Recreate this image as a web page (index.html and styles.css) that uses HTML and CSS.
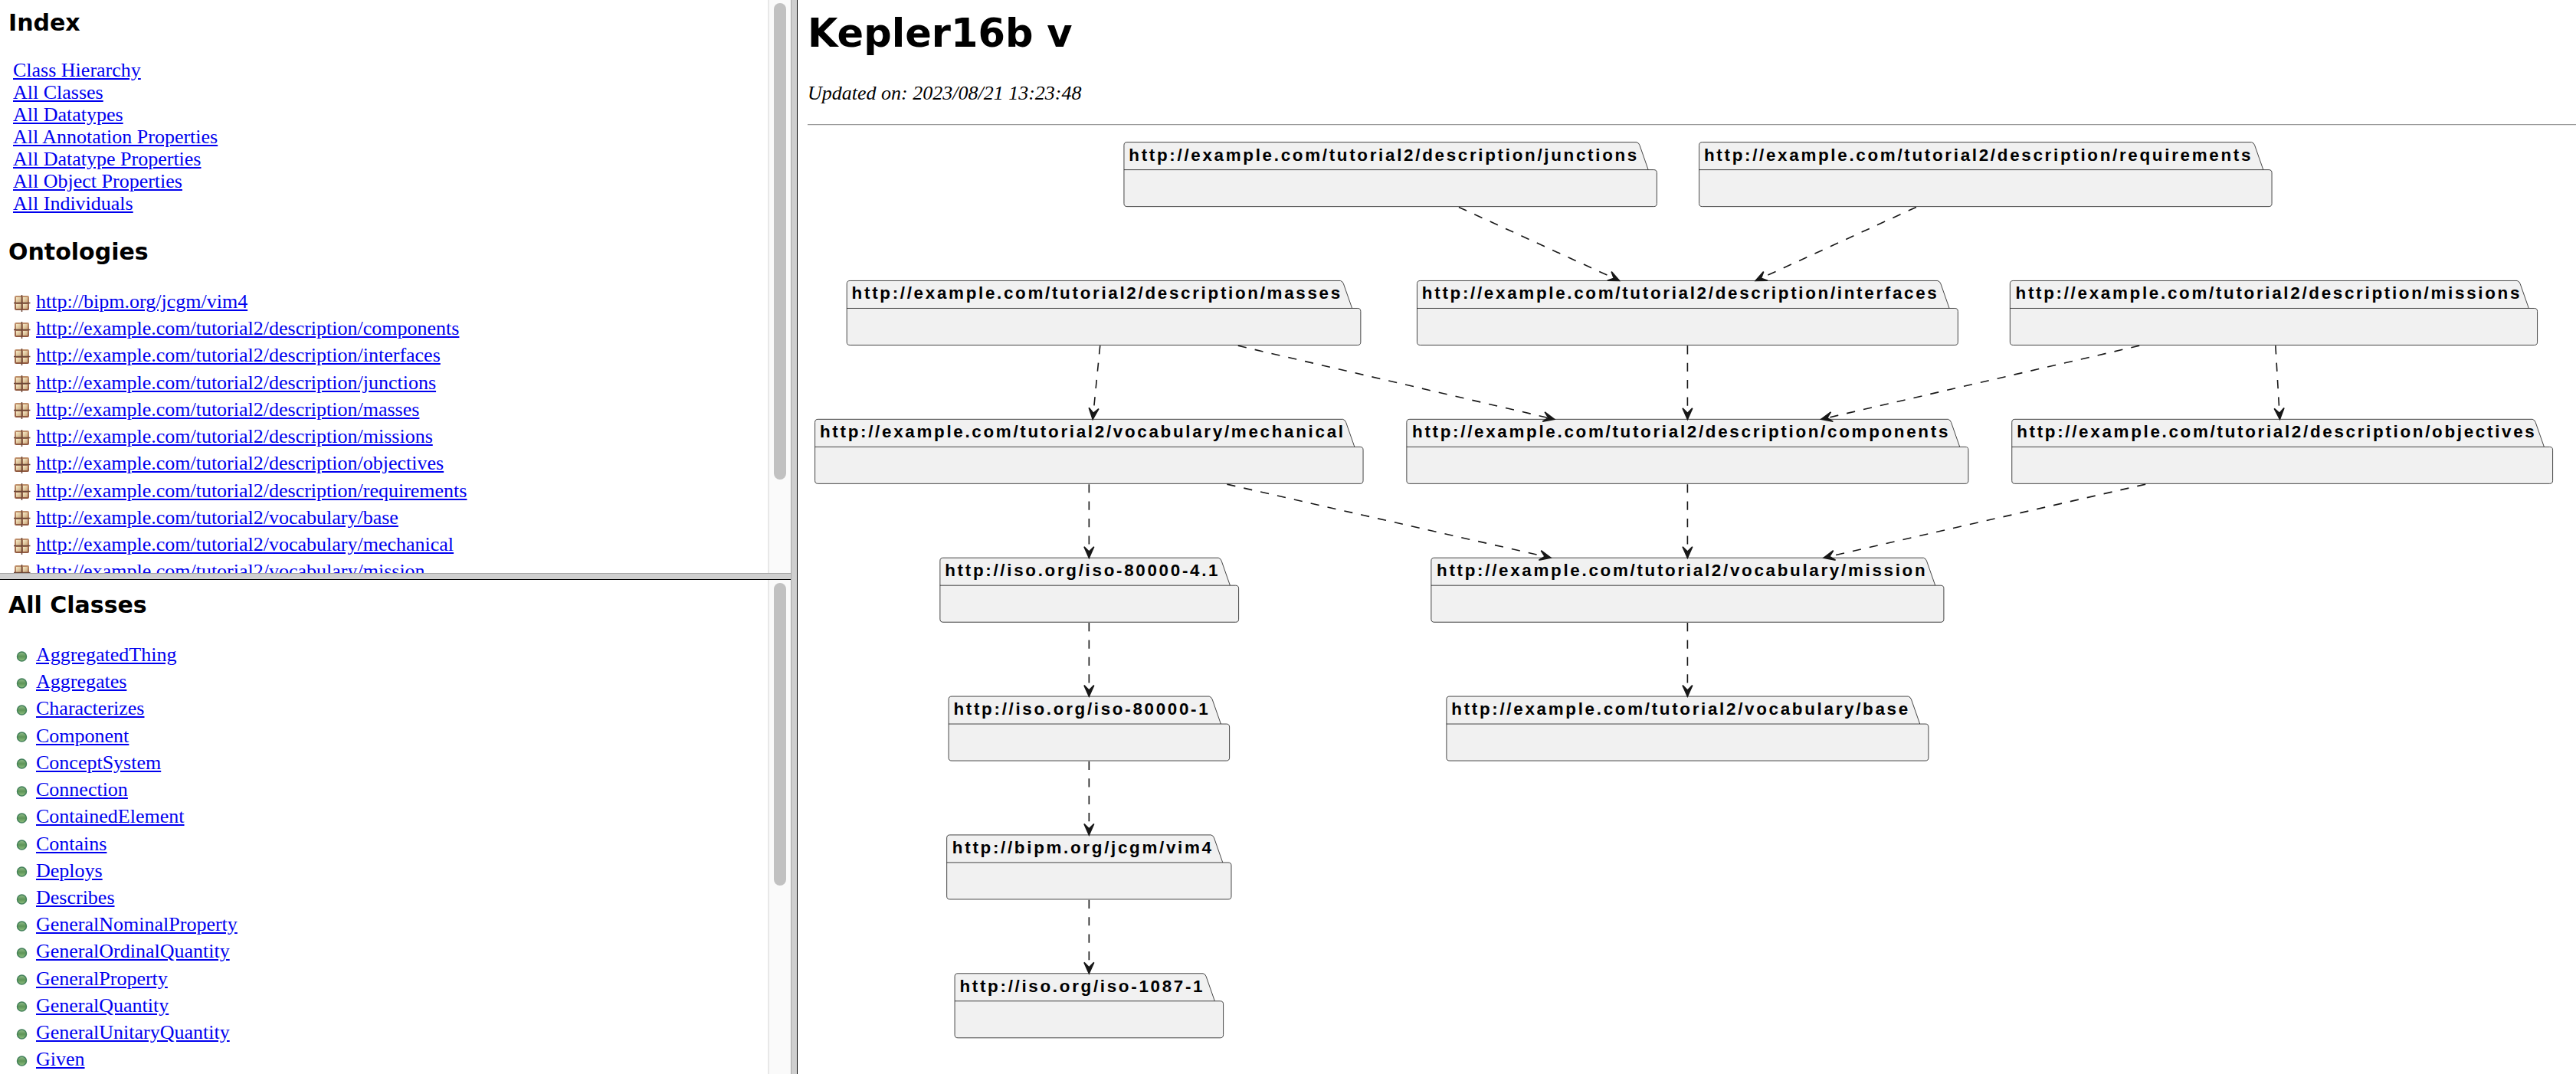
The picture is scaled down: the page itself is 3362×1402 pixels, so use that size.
FILE: index.html
```html
<!DOCTYPE html>
<html lang="en">
<head>
<meta charset="utf-8">
<title>Kepler16b v</title>
<link rel="stylesheet" href="styles.css">
</head>
<body>
<svg class="defs" aria-hidden="true">
  <defs>
    <linearGradient id="wood" x1="0" y1="0" x2="0" y2="1">
      <stop offset="0" stop-color="#c1926d"/>
      <stop offset="1" stop-color="#8f583f"/>
    </linearGradient>
    <linearGradient id="pane" x1="0" y1="0" x2="1" y2="1">
      <stop offset="0" stop-color="#f6ecc8"/>
      <stop offset="1" stop-color="#c9a377"/>
    </linearGradient>
    <linearGradient id="leaf" x1="0" y1="0" x2="0" y2="1">
      <stop offset="0" stop-color="#93bd8b"/>
      <stop offset="0.5" stop-color="#5d9457"/>
      <stop offset="1" stop-color="#8fc07f"/>
    </linearGradient>
    <symbol id="package" viewBox="0 0 24 28">
      <rect x="2" y="6" width="19" height="19" rx="2" fill="url(#wood)"/>
      <rect x="4" y="8" width="7" height="7" fill="url(#pane)"/>
      <rect x="13" y="8" width="6" height="7" fill="url(#pane)"/>
      <rect x="4" y="17" width="7" height="6" fill="url(#pane)"/>
      <rect x="13" y="17" width="6" height="6" fill="url(#pane)"/>
      <path d="M1 15.500H22.500M11.500 5V27" fill="none" stroke="#6b4636" stroke-width="1.500"/>
    </symbol>
    <symbol id="class" viewBox="0 0 24 28">
      <circle cx="11.500" cy="16" r="6" fill="url(#leaf)" stroke="#43805a" stroke-width="1.500"/>
    </symbol>
  </defs>
</svg>
<div class="frames">
  <nav class="frame frame-index" aria-label="Index">
    <div class="content">
      <h2>Index</h2>
      <ul class="links">
        <li><a href="#">Class Hierarchy</a></li>
        <li><a href="#">All Classes</a></li>
        <li><a href="#">All Datatypes</a></li>
        <li><a href="#">All Annotation Properties</a></li>
        <li><a href="#">All Datatype Properties</a></li>
        <li><a href="#">All Object Properties</a></li>
        <li><a href="#">All Individuals</a></li>
      </ul>
      <h2>Ontologies</h2>
      <ul class="items">
        <li><svg class="icon"><use href="#package"/></svg><a href="#">http://bipm.org/jcgm/vim4</a></li>
        <li><svg class="icon"><use href="#package"/></svg><a href="#">http://example.com/tutorial2/description/components</a></li>
        <li><svg class="icon"><use href="#package"/></svg><a href="#">http://example.com/tutorial2/description/interfaces</a></li>
        <li><svg class="icon"><use href="#package"/></svg><a href="#">http://example.com/tutorial2/description/junctions</a></li>
        <li><svg class="icon"><use href="#package"/></svg><a href="#">http://example.com/tutorial2/description/masses</a></li>
        <li><svg class="icon"><use href="#package"/></svg><a href="#">http://example.com/tutorial2/description/missions</a></li>
        <li><svg class="icon"><use href="#package"/></svg><a href="#">http://example.com/tutorial2/description/objectives</a></li>
        <li><svg class="icon"><use href="#package"/></svg><a href="#">http://example.com/tutorial2/description/requirements</a></li>
        <li><svg class="icon"><use href="#package"/></svg><a href="#">http://example.com/tutorial2/vocabulary/base</a></li>
        <li><svg class="icon"><use href="#package"/></svg><a href="#">http://example.com/tutorial2/vocabulary/mechanical</a></li>
        <li><svg class="icon"><use href="#package"/></svg><a href="#">http://example.com/tutorial2/vocabulary/mission</a></li>
      </ul>
    </div>
    <div class="scrollbar"><div class="thumb thumb-index"></div></div>
  </nav>
  <nav class="frame frame-classes" aria-label="All Classes">
    <div class="content">
      <h2>All Classes</h2>
      <ul class="items">
        <li><svg class="icon"><use href="#class"/></svg><a href="#">AggregatedThing</a></li>
        <li><svg class="icon"><use href="#class"/></svg><a href="#">Aggregates</a></li>
        <li><svg class="icon"><use href="#class"/></svg><a href="#">Characterizes</a></li>
        <li><svg class="icon"><use href="#class"/></svg><a href="#">Component</a></li>
        <li><svg class="icon"><use href="#class"/></svg><a href="#">ConceptSystem</a></li>
        <li><svg class="icon"><use href="#class"/></svg><a href="#">Connection</a></li>
        <li><svg class="icon"><use href="#class"/></svg><a href="#">ContainedElement</a></li>
        <li><svg class="icon"><use href="#class"/></svg><a href="#">Contains</a></li>
        <li><svg class="icon"><use href="#class"/></svg><a href="#">Deploys</a></li>
        <li><svg class="icon"><use href="#class"/></svg><a href="#">Describes</a></li>
        <li><svg class="icon"><use href="#class"/></svg><a href="#">GeneralNominalProperty</a></li>
        <li><svg class="icon"><use href="#class"/></svg><a href="#">GeneralOrdinalQuantity</a></li>
        <li><svg class="icon"><use href="#class"/></svg><a href="#">GeneralProperty</a></li>
        <li><svg class="icon"><use href="#class"/></svg><a href="#">GeneralQuantity</a></li>
        <li><svg class="icon"><use href="#class"/></svg><a href="#">GeneralUnitaryQuantity</a></li>
        <li><svg class="icon"><use href="#class"/></svg><a href="#">Given</a></li>
      </ul>
    </div>
    <div class="scrollbar"><div class="thumb thumb-classes"></div></div>
  </nav>
  <div class="divider divider-row"></div>
  <div class="divider divider-column"></div>
  <main class="frame-main">
    <h1>Kepler16b v</h1>
    <p class="updated">Updated on: 2023/08/21 13:23:48</p>
    <hr>
    <svg class="diagram" viewBox="0 0 1442 743" role="img" aria-label="Ontology imports">
      <defs>
        <marker id="arrow" markerUnits="userSpaceOnUse" markerWidth="14" markerHeight="14" viewBox="-11 -7 14 14" orient="auto">
          <path d="M0 0L-9 -4L-5 0L-9 4Z" fill="#181818" stroke="#181818"/>
        </marker>
      </defs>
      <g class="package">
        <path d="M260.500 6H676a3.750 3.750 0 0 1 2.500 2.500L685.500 28.500H690a2.500 2.500 0 0 1 2.500 2.500V56a2.500 2.500 0 0 1-2.500 2.500H260.500a2.500 2.500 0 0 1-2.500-2.500V8.500a2.500 2.500 0 0 1 2.500-2.500ZM258 28.500H685.500"/>
        <text x="262" y="21">http://example.com/tutorial2/description/junctions</text>
      </g>
      <g class="package">
        <path d="M729.500 6H1177.500a3.750 3.750 0 0 1 2.500 2.500L1187 28.500H1191.500a2.500 2.500 0 0 1 2.500 2.500V56a2.500 2.500 0 0 1-2.500 2.500H729.500a2.500 2.500 0 0 1-2.500-2.500V8.500a2.500 2.500 0 0 1 2.500-2.500ZM727 28.500H1187"/>
        <text x="731" y="21">http://example.com/tutorial2/description/requirements</text>
      </g>
      <g class="package">
        <path d="M34.500 119H434.500a3.750 3.750 0 0 1 2.500 2.500L444 141.500H448.500a2.500 2.500 0 0 1 2.500 2.500V169a2.500 2.500 0 0 1-2.500 2.500H34.500a2.500 2.500 0 0 1-2.500-2.500V121.500a2.500 2.500 0 0 1 2.500-2.500ZM32 141.500H444"/>
        <text x="36" y="134">http://example.com/tutorial2/description/masses</text>
      </g>
      <g class="package">
        <path d="M499.500 119H921.500a3.750 3.750 0 0 1 2.500 2.500L931 141.500H935.500a2.500 2.500 0 0 1 2.500 2.500V169a2.500 2.500 0 0 1-2.500 2.500H499.500a2.500 2.500 0 0 1-2.500-2.500V121.500a2.500 2.500 0 0 1 2.500-2.500ZM497 141.500H931"/>
        <text x="501" y="134">http://example.com/tutorial2/description/interfaces</text>
      </g>
      <g class="package">
        <path d="M983 119H1394a3.750 3.750 0 0 1 2.500 2.500L1403.500 141.500H1408a2.500 2.500 0 0 1 2.500 2.500V169a2.500 2.500 0 0 1-2.500 2.500H983a2.500 2.500 0 0 1-2.500-2.500V121.500a2.500 2.500 0 0 1 2.500-2.500ZM980.500 141.500H1403.500"/>
        <text x="985" y="134">http://example.com/tutorial2/description/missions</text>
      </g>
      <g class="package">
        <path d="M8.500 232H436.500a3.750 3.750 0 0 1 2.500 2.500L446 254.500H450.500a2.500 2.500 0 0 1 2.500 2.500V282a2.500 2.500 0 0 1-2.500 2.500H8.500a2.500 2.500 0 0 1-2.500-2.500V234.500a2.500 2.500 0 0 1 2.500-2.500ZM6 254.500H446"/>
        <text x="10" y="247">http://example.com/tutorial2/vocabulary/mechanical</text>
      </g>
      <g class="package">
        <path d="M491 232H930a3.750 3.750 0 0 1 2.500 2.500L939.500 254.500H944a2.500 2.500 0 0 1 2.500 2.500V282a2.500 2.500 0 0 1-2.500 2.500H491a2.500 2.500 0 0 1-2.500-2.500V234.500a2.500 2.500 0 0 1 2.500-2.500ZM488.500 254.500H939.500"/>
        <text x="493" y="247">http://example.com/tutorial2/description/components</text>
      </g>
      <g class="package">
        <path d="M984.500 232H1406.500a3.750 3.750 0 0 1 2.500 2.500L1416 254.500H1420.500a2.500 2.500 0 0 1 2.500 2.500V282a2.500 2.500 0 0 1-2.500 2.500H984.500a2.500 2.500 0 0 1-2.500-2.500V234.500a2.500 2.500 0 0 1 2.500-2.500ZM982 254.500H1416"/>
        <text x="986" y="247">http://example.com/tutorial2/description/objectives</text>
      </g>
      <g class="package">
        <path d="M110.500 345H335a3.750 3.750 0 0 1 2.500 2.500L344.500 367.500H349a2.500 2.500 0 0 1 2.500 2.500V395a2.500 2.500 0 0 1-2.500 2.500H110.500a2.500 2.500 0 0 1-2.500-2.500V347.500a2.500 2.500 0 0 1 2.500-2.500ZM108 367.500H344.500"/>
        <text x="112" y="360">http://iso.org/iso-80000-4.1</text>
      </g>
      <g class="package">
        <path d="M511 345H910a3.750 3.750 0 0 1 2.500 2.500L919.500 367.500H924a2.500 2.500 0 0 1 2.500 2.500V395a2.500 2.500 0 0 1-2.500 2.500H511a2.500 2.500 0 0 1-2.500-2.500V347.500a2.500 2.500 0 0 1 2.500-2.500ZM508.500 367.500H919.500"/>
        <text x="513" y="360">http://example.com/tutorial2/vocabulary/mission</text>
      </g>
      <g class="package">
        <path d="M117.500 458H327.500a3.750 3.750 0 0 1 2.500 2.500L337 480.500H341.500a2.500 2.500 0 0 1 2.500 2.500V508a2.500 2.500 0 0 1-2.500 2.500H117.500a2.500 2.500 0 0 1-2.500-2.500V460.500a2.500 2.500 0 0 1 2.500-2.500ZM115 480.500H337"/>
        <text x="119" y="473">http://iso.org/iso-80000-1</text>
      </g>
      <g class="package">
        <path d="M523.500 458H897.500a3.750 3.750 0 0 1 2.500 2.500L907 480.500H911.500a2.500 2.500 0 0 1 2.500 2.500V508a2.500 2.500 0 0 1-2.500 2.500H523.500a2.500 2.500 0 0 1-2.500-2.500V460.500a2.500 2.500 0 0 1 2.500-2.500ZM521 480.500H907"/>
        <text x="525" y="473">http://example.com/tutorial2/vocabulary/base</text>
      </g>
      <g class="package">
        <path d="M116 571H329a3.750 3.750 0 0 1 2.500 2.500L338.500 593.500H343a2.500 2.500 0 0 1 2.500 2.500V621a2.500 2.500 0 0 1-2.500 2.500H116a2.500 2.500 0 0 1-2.500-2.500V573.500a2.500 2.500 0 0 1 2.500-2.500ZM113.500 593.500H338.500"/>
        <text x="118" y="586">http://bipm.org/jcgm/vim4</text>
      </g>
      <g class="package">
        <path d="M122.500 684H322.500a3.750 3.750 0 0 1 2.500 2.500L332 706.500H336.500a2.500 2.500 0 0 1 2.500 2.500V734a2.500 2.500 0 0 1-2.500 2.500H122.500a2.500 2.500 0 0 1-2.500-2.500V686.500a2.500 2.500 0 0 1 2.500-2.500ZM120 706.500H332"/>
        <text x="124" y="699">http://iso.org/iso-1087-1</text>
      </g>
      <g class="imports">
        <path d="M531 59L662 119"/>
        <path d="M904 59L773 119"/>
        <path d="M238.500 172L232.500 232"/>
        <path d="M351 172L609 232"/>
        <path d="M717.500 172V232"/>
        <path d="M1086 172L826.500 232"/>
        <path d="M1197 172L1200.500 232"/>
        <path d="M229.500 285V345"/>
        <path d="M342 285L606 345"/>
        <path d="M717.500 285V345"/>
        <path d="M1091 285L828.500 345"/>
        <path d="M229.500 398V458"/>
        <path d="M717.500 398V458"/>
        <path d="M229.500 511V571"/>
        <path d="M229.500 624V684"/>
      </g>
    </svg>
  </main>
</div>
</body>
</html>
```

FILE: styles.css
```css
body {
  margin: 0;
  background: #fff;
  color: #000;
  font-family: "Liberation Serif", "Times New Roman", serif;
  font-size: 26px;
  line-height: 29px;
}

h1,
h2 {
  margin: 0;
  font-family: "DejaVu Sans", Verdana, sans-serif;
  font-weight: bold;
}

h1 {
  font-size: 51px;
  line-height: 60px;
}

h2 {
  font-size: 30px;
  line-height: 36px;
}

a {
  color: #0000ee;
}

.defs {
  display: block;
  width: 0;
  height: 0;
}

/* Three frames: two stacked on the left, the overview on the right */
.frames {
  display: grid;
  grid-template-columns: 1032fr 9px 2321fr;
  grid-template-rows: 748fr 9px 645fr;
  height: 100vh;
}

.frame {
  display: flex;
  min-width: 0;
  min-height: 0;
  overflow: hidden;
  grid-column: 1;
}

.frame-index {
  grid-row: 1;
  padding-top: 12px;
}

.frame-classes {
  grid-row: 3;
  padding-top: 15px;
}

.divider {
  box-sizing: border-box;
  background: #cfcfcf;
}

.divider-row {
  grid-area: 2 / 1;
  border-top: 1px solid #a6a6a6;
  border-bottom: 1px solid #000;
}

.divider-column {
  grid-area: 1 / 2 / 4 / 3;
  border-left: 1px solid #a6a6a6;
  border-right: 1px solid #000;
}

.content {
  flex: 1;
  min-width: 0;
  padding-left: 11px;
}

.links,
.items {
  margin: 29px 0 31px;
  padding: 0 0 0 6px;
  list-style: none;
}

.items {
  line-height: 1.355;
}

.items li {
  display: flex;
  align-items: center;
  gap: 6px;
}

.icon {
  width: 24px;
  height: 28px;
}

.scrollbar {
  box-sizing: border-box;
  width: 30px;
  border-left: 2px solid #e8e8e8;
  background: #fafafa;
  padding: 4px 6px;
}

.frame-index .scrollbar {
  margin-top: -12px;
}

.frame-classes .scrollbar {
  margin-top: -15px;
}

.thumb {
  width: 16px;
  border-radius: 8px;
  background: #c1c1c1;
}

.thumb-index {
  height: 84%;
}

.thumb-classes {
  height: 62%;
}

.frame-main {
  grid-area: 1 / 3 / 4 / 4;
  min-width: 0;
  overflow: hidden;
  padding: 14px 0 0 13px;
}

.updated {
  margin: 33px 0 26px;
  font-style: italic;
}

hr {
  margin: 0 0 12px;
  border: 0;
  border-top: 1px solid #9a9a9a;
  border-bottom: 1px solid #e6e6e6;
}

.diagram {
  display: block;
  width: 100%;
}

.package path {
  fill: #f1f1f1;
  stroke: #181818;
  stroke-width: 0.5;
}

.package text {
  font-family: "Liberation Sans", Arial, sans-serif;
  font-size: 14px;
  font-weight: bold;
  letter-spacing: 0.12em;
}

.imports path {
  fill: none;
  stroke: #181818;
  stroke-dasharray: 7 7;
  marker-end: url(#arrow);
}
```
